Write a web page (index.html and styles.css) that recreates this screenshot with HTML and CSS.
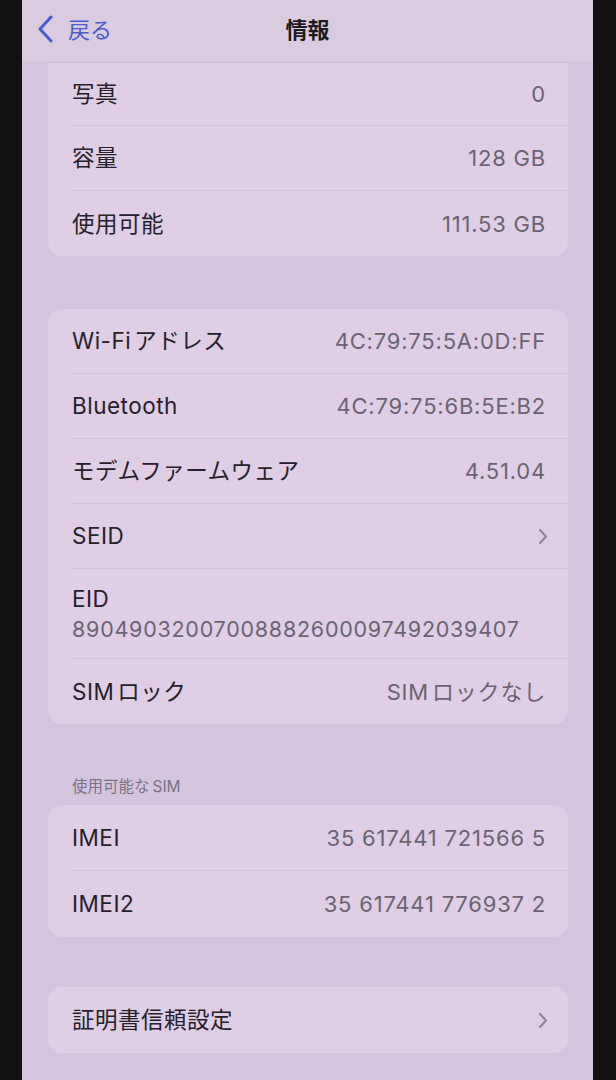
FILE: index.html
```html
<!DOCTYPE html>
<html lang="ja">
<head>
<meta charset="utf-8">
<title>情報</title>
<link rel="stylesheet" href="styles.css">
</head>
<body>
<div class="phone">
  <header class="nav">
    <div class="back">
      <svg class="back-chev" width="17" height="28" viewBox="0 0 17 28"><polyline points="14,2 3,14 14,26" fill="none" stroke="#4a5ad0" stroke-width="3" stroke-linecap="round" stroke-linejoin="round"/></svg>
      <span class="back-text">戻る</span>
    </div>
    <div class="title">情報</div>
    <div class="spacer"></div>
  </header>
  <main class="list">
    <section class="card card-top">
      <div class="row first"><div class="inner"><span class="label">写真</span><span class="value">0</span></div></div>
      <div class="row"><div class="inner"><span class="label">容量</span><span class="value">128 GB</span></div></div>
      <div class="row"><div class="inner last"><span class="label">使用可能</span><span class="value">111.53 GB</span></div></div>
    </section>

    <section class="card card-gap">
      <div class="row"><div class="inner"><span class="label">Wi-Fi<span class="ja">アドレス</span></span><span class="value">4C:79:75:5A:0D:FF</span></div></div>
      <div class="row"><div class="inner"><span class="label">Bluetooth</span><span class="value">4C:79:75:6B:5E:B2</span></div></div>
      <div class="row"><div class="inner"><span class="label">モデムファームウェア</span><span class="value">4.51.04</span></div></div>
      <div class="row"><div class="inner"><span class="label">SEID</span><svg class="chev" width="10" height="17" viewBox="0 0 10 17"><polyline points="2,2 8,8.5 2,15" fill="none" stroke="#8c8393" stroke-width="2" stroke-linecap="round" stroke-linejoin="round"/></svg></div></div>
      <div class="row"><div class="inner stacked"><span class="label">EID</span><span class="value sub">89049032007008882600097492039407</span></div></div>
      <div class="row"><div class="inner last"><span class="label">SIM<span class="ja">ロック</span></span><span class="value">SIM<span class="ja">ロックなし</span></span></div></div>
    </section>

    <div class="section-header">使用可能な<span class="ja-s">SIM</span></div>
    <section class="card card-sim">
      <div class="row"><div class="inner"><span class="label">IMEI</span><span class="value">35 617441 721566 5</span></div></div>
      <div class="row"><div class="inner last"><span class="label">IMEI2</span><span class="value">35 617441 776937 2</span></div></div>
    </section>

    <section class="card card-gap2 card-sim">
      <div class="row"><div class="inner last"><span class="label">証明書信頼設定</span><svg class="chev" width="10" height="17" viewBox="0 0 10 17"><polyline points="2,2 8,8.5 2,15" fill="none" stroke="#8c8393" stroke-width="2" stroke-linecap="round" stroke-linejoin="round"/></svg></div></div>
    </section>
  </main>
</div>
</body>
</html>
```
FILE: styles.css
```css
html, body {
  margin: 0;
  padding: 0;
  background: #121013;
}
body {
  font-family: "Inter", "Noto Sans CJK JP", sans-serif;
  color: #25202a;
}
.phone {
  margin-left: 22px;
  width: 571px;
  height: 1080px;
  overflow: hidden;
  background: #d5c4df;
}
.nav {
  height: 63px;
  display: flex;
  align-items: center;
  padding-bottom: 5px;
  box-sizing: border-box;
  background: #dbcbe0;
  border-bottom: 1px solid #cdbfd4;
}
.back {
  width: 150px;
  display: flex;
  align-items: center;
  padding-left: 15px;
  box-sizing: border-box;
  gap: 14px;
}
.back-chev { display: block; }
.back-text {
  font-size: 22px;
  color: #4d5ccc;
  font-family: "Noto Sans CJK JP", sans-serif;
  line-height: 1;
  padding-bottom: 2px;
}
.title {
  flex: 1;
  text-align: center;
  font-size: 22px;
  font-weight: 600;
  font-family: "Noto Sans CJK JP", sans-serif;
  color: #1e1a22;
  padding-bottom: 2px;
}
.spacer { width: 150px; }
.list {
  padding: 0 25px 0 26px;
}
.card {
  background: #dfcee6;
  border-radius: 14px;
  overflow: hidden;
}
.card-top {
  border-radius: 0 0 14px 14px;
}
.card-gap { margin-top: 53px; }
.card-gap2 { margin-top: 50px; }
.row {
  padding-left: 24px;
}
.inner {
  height: 65px;
  display: flex;
  align-items: center;
  justify-content: space-between;
  padding-right: 22px;
  border-bottom: 1px solid #cfbfd8;
  box-sizing: border-box;
}
.row.first .inner { height: 63px; }
.card-sim .inner { height: 66px; }
.inner.last { border-bottom: none; }
.inner.stacked {
  height: 90px;
  flex-direction: column;
  align-items: flex-start;
  justify-content: center;
  gap: 2px;
}
.label {
  font-size: 22.5px;
  line-height: 28px;
  letter-spacing: 0.5px;
}
.value {
  font-size: 22px;
  line-height: 28px;
  color: #6b6373;
  letter-spacing: 0.8px;
}
.value.sub {
  font-size: 21.5px;
  letter-spacing: 0.75px;
}
.ja { margin-left: 3px; }
.ja-s { margin-left: 3px; }
.chev { display: block; margin-right: -2px; }
.section-header {
  padding: 52px 0 7px 24px;
  font-size: 15.5px;
  line-height: 22px;
  color: #7b7283;
}
```
